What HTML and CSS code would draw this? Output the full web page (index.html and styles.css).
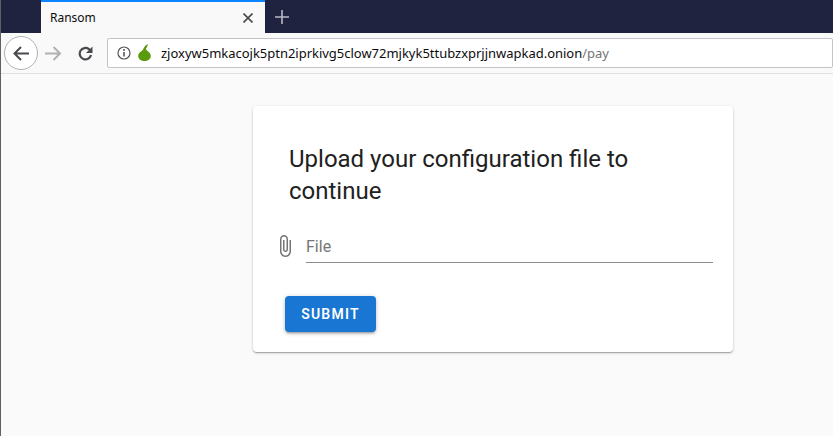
FILE: index.html
```html
<!DOCTYPE html>
<html lang="en">
<head>
<meta charset="utf-8">
<title>Ransom</title>
<link rel="stylesheet" href="styles.css">
</head>
<body>
<div class="window">
  <div class="tabbar">
    <div class="tab">
      <span class="tab-title">Ransom</span>
      <svg class="tab-close" width="10" height="10" viewBox="0 0 10 10"><path d="M.5.5l9 9M9.500.5l-9 9" stroke="#4a4a4f" stroke-width="1.600" fill="none"/></svg>
    </div>
    <svg class="new-tab" width="14" height="14" viewBox="0 0 14 14"><path d="M7 0v14M0 7h14" stroke="#b9bac6" stroke-width="1.600" fill="none"/></svg>
  </div>
  <div class="toolbar">
    <div class="back">
      <svg width="16" height="15" viewBox="0 0 16 15"><path d="M8 1L1.500 7.500 8 14M1.500 7.500H16" stroke="#4a4a4f" stroke-width="2" fill="none"/></svg>
    </div>
    <svg class="forward" width="17" height="15" viewBox="0 0 17 15"><path d="M8.500 1L15 7.500 8.500 14M15 7.500H0" stroke="#b1b1b3" stroke-width="2" fill="none"/></svg>
    <svg class="reload" width="15" height="15" viewBox="0 0 15 15"><path d="M13 9A5.700 5.700 0 1 1 11 3.200L13 5" stroke="#4a4a4f" stroke-width="2.200" fill="none"/><path d="M14.500 0.500v6.500H8z" fill="#4a4a4f"/></svg>
    <div class="urlbar">
      <svg class="info" width="14" height="14" viewBox="0 0 14 14"><circle cx="7" cy="7" r="6" stroke="#55555a" stroke-width="1.200" fill="none"/><path d="M7 6v4.500" stroke="#55555a" stroke-width="1.600"/><circle cx="7" cy="4" r="1" fill="#55555a"/></svg>
      <svg class="onion" width="13" height="17" viewBox="0 0 13 17"><path d="M5.500 4.500C5 7 .2 8 .2 12c0 3 3 5 6.300 5s6.300-2 6.300-5c0-4-4.500-5-5-7.500z" fill="#5b9a0e"/><path d="M5.500 5C5.800 3 7.500 1 10 0 9.500 2 8.500 4 7.500 5.500z" fill="#5b9a0e"/></svg>
      <span class="url">zjoxyw5mkacojk5ptn2iprkivg5clow72mjkyk5ttubzxprjjnwapkad.onion<span class="url-path">/pay</span></span>
    </div>
  </div>
  <main class="page">
    <form class="card">
      <h1 class="card-title">Upload your configuration file to continue</h1>
      <div class="field">
        <svg class="clip" width="24" height="24" viewBox="0 0 24 24"><path d="M16.500 6v11.500c0 2.210-1.790 4-4 4s-4-1.790-4-4V5c0-1.380 1.120-2.500 2.500-2.500s2.500 1.120 2.500 2.500v10.500c0 .55-.45 1-1 1s-1-.45-1-1V6H10v9.500c0 1.380 1.120 2.500 2.500 2.500s2.500-1.120 2.500-2.500V5c0-2.210-1.790-4-4-4S7 2.790 7 5v12.500c0 3.040 2.460 5.500 5.500 5.500s5.500-2.460 5.500-5.500V6h-1.500z" fill="#757575"/></svg>
        <div class="input">File</div>
      </div>
      <button class="submit" type="button">Submit</button>
    </form>
  </main>
</div>
</body>
</html>
```
FILE: styles.css
```css
* { box-sizing: border-box; }
html, body { margin: 0; height: 100%; overflow: hidden; }
.window {
  width: 833px;
  height: 436px;
  display: flex;
  flex-direction: column;
  border-left: 1px solid #5f6064;
  background: #fafafa;
}
.tabbar {
  height: 33px;
  background: #1f2340;
  display: flex;
  align-items: center;
  padding-left: 40px;
  flex: none;
}
.tab {
  width: 224px;
  height: 33px;
  background: #f9f9fa;
  border-top: 2px solid #0a84ff;
  display: flex;
  align-items: center;
  justify-content: space-between;
  padding: 0 12px 0 9px;
  font: 12px "Noto Sans", "Open Sans", sans-serif;
  color: #0c0c0d;
}
.new-tab { margin-left: 10px; }
.toolbar {
  height: 41px;
  flex: none;
  background: #f9f9fa;
  border-bottom: 1px solid #e0e0e2;
  display: flex;
  align-items: center;
  padding-left: 3px;
}
.back {
  width: 34px;
  height: 34px;
  border-radius: 50%;
  border: 1px solid #b1b1b3;
  background: #fff;
  display: flex;
  align-items: center;
  justify-content: center;
}
.forward { margin-left: 7px; }
.reload { margin-left: 16px; }
.urlbar {
  width: 726px;
  height: 30px;
  margin-left: 14px;
  background: #fff;
  border: 1px solid #c4c4c6;
  border-radius: 2px;
  display: flex;
  align-items: center;
  padding-left: 9px;
}
.onion { margin-left: 7px; margin-top: -2px; }
.url {
  margin-left: 10px;
  font: 13px "Noto Sans", "Open Sans", sans-serif;
  letter-spacing: -0.015px;
  color: #0c0c0d;
  white-space: nowrap;
}
.url-path { color: #737373; }
.page { flex: 1; padding: 32px 0 0 252px; }
.card {
  width: 480px;
  height: 246px;
  background: #fff;
  border-radius: 4px;
  box-shadow: 0 1px 3px rgba(0,0,0,.2), 0 1px 1px rgba(0,0,0,.14), 0 2px 1px -1px rgba(0,0,0,.12);
  padding: 37px 20px 0 20px;
}
.card-title {
  margin: 0 0 22px 16px;
  width: 400px;
  font: 400 24px/32px Roboto, sans-serif;
  color: #212121;
}
.field { display: flex; align-items: center; height: 34px; }
.clip { flex: none; margin-right: 9px; }
.input {
  flex: 1;
  height: 34px;
  padding-top: 5px;
  border-bottom: 1px solid #8c8c8c;
  font: 16px/26px Roboto, sans-serif;
  color: #757575;
}
.submit {
  display: block;
  margin: 33px 0 0 12px;
  width: 91px;
  height: 36px;
  border: 0;
  border-radius: 4px;
  background: #1976d2;
  color: #fff;
  font: 600 14px/36px Roboto, sans-serif;
  letter-spacing: 1.2px;
  text-transform: uppercase;
  padding: 0;
  box-shadow: 0 1px 5px rgba(0,0,0,.2), 0 2px 2px rgba(0,0,0,.14), 0 3px 1px -2px rgba(0,0,0,.12);
}
```
